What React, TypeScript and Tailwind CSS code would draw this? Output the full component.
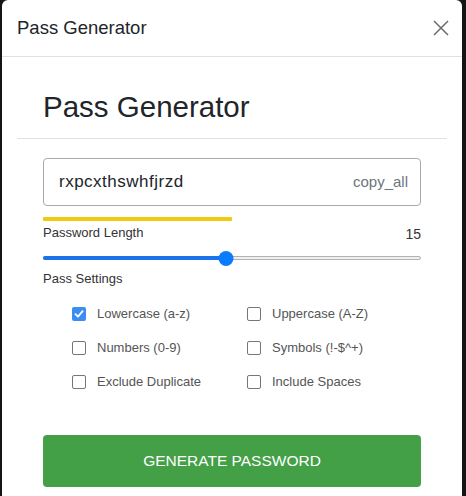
import React from "react";

// ── Options ────────────────────────────────────────────────────────────
const OPTIONS: { label: string; checked: boolean }[] = [
  { label: "Lowercase (a-z)", checked: true },
  { label: "Uppercase (A-Z)", checked: false },
  { label: "Numbers (0-9)", checked: false },
  { label: "Symbols (!-$^+)", checked: false },
  { label: "Exclude Duplicate", checked: false },
  { label: "Include Spaces", checked: false },
];

function Checkbox({ checked }: { checked: boolean }) {
  if (checked) {
    return (
      <span className="w-[14px] h-[14px] rounded-[2px] bg-[#3b8cf5] flex items-center justify-center flex-shrink-0">
        <svg width="10" height="10" viewBox="0 0 10 10" fill="none">
          <path d="M1.5 5.2 L4 7.6 L8.6 2.2" stroke="#fff" strokeWidth="1.8" strokeLinecap="round" strokeLinejoin="round" />
        </svg>
      </span>
    );
  }
  return <span className="w-[14px] h-[14px] rounded-[2px] border border-[#767676] bg-white flex-shrink-0" />;
}

// thumb sits inside the track like a native range input
function Slider({ value, min, max }: { value: number; min: number; max: number }) {
  const f = (value - min) / (max - min);
  const pos = `calc(7px + ${f} * (100% - 14px))`;
  return (
    <div className="relative h-[14px] flex items-center">
      <div className="w-full h-[4px] rounded-full bg-[#efefef] border border-[#b2b2b2]" />
      <div className="absolute left-0 h-[4px] rounded-full bg-[#1a73e8]" style={{ width: pos }} />
      <div
        className="absolute w-[15px] h-[15px] rounded-full bg-[#0b7cff] -translate-x-1/2"
        style={{ left: pos }}
      />
    </div>
  );
}

export default function App() {
  return (
    <div className="w-[466px] h-[496px] bg-[#141414] overflow-hidden" style={{ fontFamily: "'Liberation Sans', Arial, sans-serif" }}>
      <div className="ml-[2px] w-[460px] h-[520px] bg-white rounded-t-[6px]">
        {/* header */}
        <div className="h-[57px] px-[15px] flex items-center justify-between border-b border-[#dee2e6]">
          <span className="text-[18.5px] leading-[22px] text-[#212529]">Pass Generator</span>
          <svg width="16" height="16" viewBox="0 0 16 16" className="mr-[-2px]">
            <path d="M1 1 L15 15 M15 1 L1 15" stroke="#6c6c6c" strokeWidth="1.5" />
          </svg>
        </div>

        {/* body */}
        <div className="px-[15px]">
          <h1 className="pt-[33px] pl-[26px] text-[29.5px] leading-[34px] text-[#212529]">Pass Generator</h1>
          <div className="mt-[14px] border-t border-[#dee2e6]" />

          <div className="px-[26px]">
            <div className="mt-[19px] h-[48px] rounded-[4px] border border-[#aaa] flex items-center justify-between pl-[15px] pr-[12px]">
              <span className="text-[17px] text-[#212529] tracking-[0.5px]">rxpcxthswhfjrzd</span>
              <span className="text-[15px] text-[#6c757d]">copy_all</span>
            </div>

            <div className="mt-[11px] h-[4px] w-[189px] bg-[#f2c811] rounded-[1px]" />

            <div className="mt-[3px] flex items-center justify-between text-[#333]">
              <span className="text-[13px] leading-[16px]">Password Length</span>
              <span className="text-[14px] leading-[16px] mt-[2px]">15</span>
            </div>

            <div className="mt-[9px]">
              <Slider value={15} min={1} max={30} />
            </div>

            <div className="mt-[6px] text-[13px] leading-[16px] text-[#333]">Pass Settings</div>

            <div className="mt-[10px] pl-[29px] grid grid-cols-[175px_175px]">
              {OPTIONS.map((o) => (
                <div key={o.label} className="h-[34px] flex items-center gap-[11px]">
                  <Checkbox checked={o.checked} />
                  <span className="text-[13px] leading-[16px] text-[#555]">{o.label}</span>
                </div>
              ))}
            </div>

            <button className="mt-[36px] w-full h-[52px] rounded-[4px] bg-[#43a047] text-white text-[15.5px]">
              GENERATE PASSWORD
            </button>
          </div>
        </div>
      </div>
    </div>
  );
}
